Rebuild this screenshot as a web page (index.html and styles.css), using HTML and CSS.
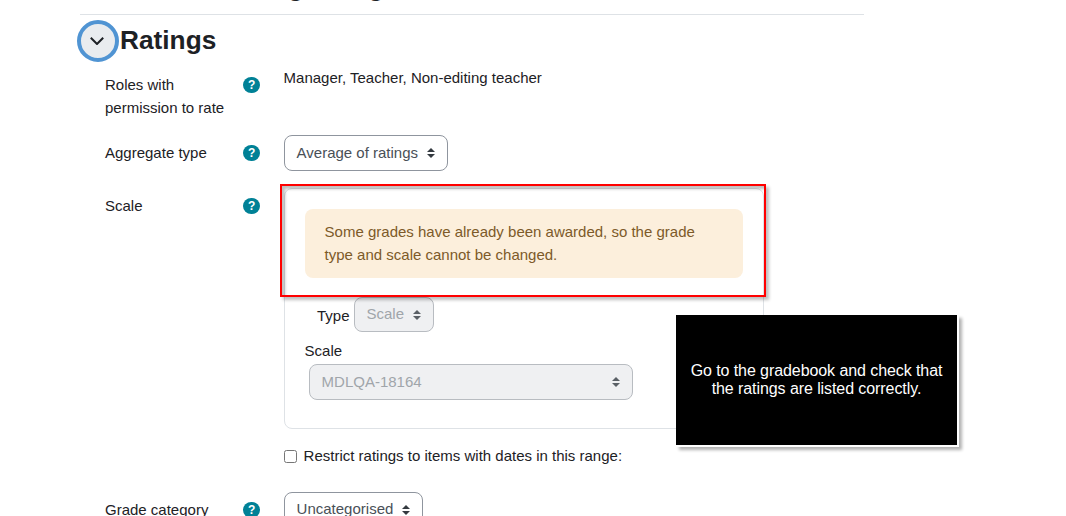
FILE: index.html
```html
<!DOCTYPE html>
<html lang="en">
<head>
<meta charset="utf-8">
<title>Ratings</title>
<link rel="stylesheet" href="styles.css">
</head>
<body>
<div class="page">
  <h3 class="prev-heading">Whole forum grading</h3>
  <section class="section">
    <div class="section-head">
      <button class="toggle" type="button" aria-label="Collapse">
        <svg class="chevron" width="14" height="8" viewBox="0 0 14 8"><path d="M.8.8 7 7 13.2.8" fill="none" stroke="#1d2125" stroke-width="2"/></svg>
      </button>
      <h3 class="section-title">Ratings</h3>
    </div>

    <div class="row row-roles">
      <div class="label">Roles with permission to rate</div>
      <span class="help">?</span>
      <div class="static">Manager, Teacher, Non-editing teacher</div>
    </div>

    <div class="row row-aggregate">
      <div class="label">Aggregate type</div>
      <span class="help">?</span>
      <div><div class="select select-aggregate"><span>Average of ratings</span>
        <svg class="arrows" width="8" height="10" viewBox="0 0 8 10"><path d="M4 0 8 4H0zM4 10 0 6h8z"/></svg></div></div>
    </div>

    <div class="row row-scale">
      <div class="label">Scale</div>
      <span class="help">?</span>
      <div class="fieldset">
        <div class="alert">Some grades have already been awarded, so the grade type and scale cannot be changed.</div>
        <div class="type-row">
          <span class="type-label">Type</span>
          <div class="select select-disabled select-type"><span>Scale</span>
            <svg class="arrows" width="8" height="10" viewBox="0 0 8 10"><path d="M4 0 8 4H0zM4 10 0 6h8z"/></svg></div>
        </div>
        <div class="scale-label">Scale</div>
        <div class="select select-disabled select-scale"><span>MDLQA-18164</span>
          <svg class="arrows" width="8" height="10" viewBox="0 0 8 10"><path d="M4 0 8 4H0zM4 10 0 6h8z"/></svg></div>
      </div>
    </div>

    <div class="row row-check">
      <div></div>
      <div></div>
      <label class="check"><input type="checkbox"><span>Restrict ratings to items with dates in this range:</span></label>
    </div>

    <div class="row">
      <div class="label">Grade category</div>
      <span class="help">?</span>
      <div><div class="select select-category"><span>Uncategorised</span>
        <svg class="arrows" width="8" height="10" viewBox="0 0 8 10"><path d="M4 0 8 4H0zM4 10 0 6h8z"/></svg></div></div>
    </div>
  </section>
</div>

<div class="highlight"></div>
<div class="caption"><p>Go to the gradebook and check that<br>the ratings are listed correctly.</p></div>
</body>
</html>
```

FILE: styles.css
```css
* { box-sizing: border-box; }

html, body {
  margin: 0;
  height: 516px;
  overflow: hidden;
  background: #fff;
}

body {
  position: relative;
  font-family: "Liberation Sans", Arial, sans-serif;
  font-size: 15px;
  line-height: 22.5px;
  color: #1d2125;
}

.page {
  width: 784px;
  margin-left: 80px;
}

.prev-heading {
  margin: -28px 0 0;
  padding-left: 40px;
  height: 42px;
  font-size: 26.25px;
  line-height: 30px;
  font-weight: 700;
}

.section {
  border-top: 1px solid #dee2e6;
  padding-top: 5px;
}

.section-head {
  display: flex;
  align-items: center;
  gap: 1px;
  margin-left: -3px;
  margin-bottom: 5px;
}

.toggle {
  display: flex;
  align-items: center;
  justify-content: center;
  width: 42px;
  height: 42px;
  padding: 0;
  border: 4px solid #5094d3;
  border-radius: 50%;
  background: #e9ecef;
}

.chevron { margin-right: 2px; }

.section-title {
  margin: -2px 0 0;
  font-size: 26.25px;
  line-height: 30px;
  font-weight: 700;
}

.row {
  display: grid;
  grid-template-columns: 138.6px 40px 480px;
  padding-left: 25px;
  margin-bottom: 16px;
}

.row-aggregate { margin-bottom: 17px; }
.row-check { margin-bottom: 24px; }

.label { padding-top: 7px; }

.help {
  display: flex;
  align-items: center;
  justify-content: center;
  width: 16.5px;
  height: 16px;
  margin: 10px 0 0 -.3px;
  border-radius: 50%;
  background: #008196;
  color: #fff;
  font-size: 12px;
  font-weight: 700;
  line-height: 16px;
}

.select {
  display: flex;
  align-items: center;
  justify-content: space-between;
  height: 36px;
  padding: 0 12px 0 12px;
  border: 1px solid #8f959e;
  border-radius: 8px;
  background: #fff;
  color: #495057;
}

.select-aggregate { width: 164px; }
.select-category { width: 139px; }

.select-disabled {
  background: #eff0f2;
  border-color: #b8bcc1;
  color: #a0a5aa;
}

.arrows { flex: none; fill: #343a40; }
.select-disabled .arrows { fill: #5a6066; }

.fieldset {
  height: 241px;
  padding: 20px;
  border: 1px solid #dee2e6;
  border-radius: 8px;
}

.alert {
  padding: 12px 20px;
  margin-bottom: 19px;
  border-radius: 8px;
  background: #fcefdc;
  color: #7d5a29;
}

.type-row {
  display: flex;
  gap: 4px;
  margin-left: 12.4px;
}

.type-label { padding-top: 8px; }

.select-type { width: 80px; height: 35px; }

.scale-label { margin-top: 8px; height: 24px; }

.select-scale { width: 324px; margin-left: 4px; }

.check {
  display: flex;
  align-items: center;
  gap: 7px;
}

.check input {
  width: 13px;
  height: 13px;
  margin: 0;
}

.highlight {
  position: absolute;
  left: 280px;
  top: 184px;
  width: 486px;
  height: 113px;
  border: 2px solid #f00;
  box-shadow: 3px 3px 3px rgba(0, 0, 0, .25), inset 3px 3px 3px rgba(0, 0, 0, .25);
}

.caption {
  position: absolute;
  left: 676px;
  top: 315px;
  width: 283px;
  height: 132px;
  display: flex;
  align-items: center;
  justify-content: center;
  background: #000;
  border-right: 2px solid #fff;
  border-bottom: 2px solid #fff;
  box-shadow: 3px 3px 3px rgba(0, 0, 0, .3);
  color: #fff;
  font-size: 16px;
  line-height: 18px;
  letter-spacing: -.08px;
  text-align: center;
}

.caption p { margin: 0; }
```
